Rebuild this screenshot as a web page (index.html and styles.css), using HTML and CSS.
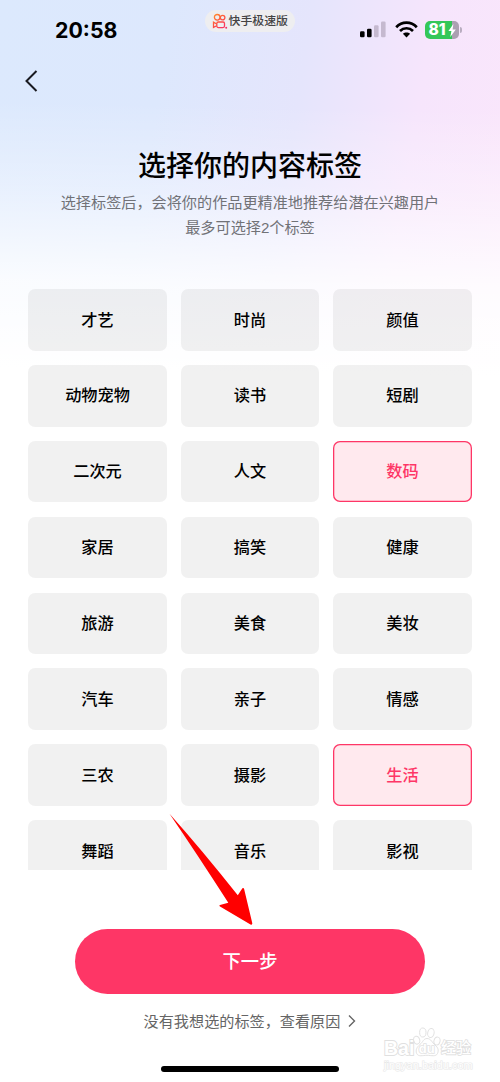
FILE: index.html
```html
<!DOCTYPE html>
<html lang="zh-CN">
<head>
<meta charset="utf-8">
<title>选择你的内容标签</title>
<link rel="stylesheet" href="styles.css">
</head>
<body>
<div class="screen">
  <header class="status">
    <span class="clock">20:58</span>
    <div class="app-pill">
      <svg class="app-logo" width="16" height="17" viewBox="0 0 16 17" fill="none">
        <defs><linearGradient id="logo" x1="0" y1="0" x2="12" y2="16" gradientUnits="userSpaceOnUse"><stop stop-color="#ff9b25"/><stop offset=".5" stop-color="#ff573e"/><stop offset="1" stop-color="#f82e67"/></linearGradient></defs>
        <g stroke="url(#logo)" stroke-width="1.3">
          <circle cx="5.2" cy="4.3" r="2.8"/><circle cx="10.6" cy="4.6" r="2.3"/>
          <rect x="4.8" y="9" width="7.7" height="5.6" rx="1.5"/>
          <path d="M4.7 11 1.5 9.2v5.2l3.2-1.7"/>
        </g>
        <circle cx="14.2" cy="14.8" r="1" fill="#f82e67"/>
      </svg>
      <span>快手极速版</span>
    </div>
    <div class="indicators">
      <svg width="26" height="17" viewBox="0 0 26 17">
        <rect x="0" y="10.3" width="4.6" height="6" rx="1.3"/><rect x="7" y="7.7" width="4.6" height="8.6" rx="1.3"/>
        <g fill="#c5b9cf"><rect x="14" y="4.2" width="4.6" height="12.1" rx="1.3"/><rect x="21" y="0.5" width="4.6" height="15.8" rx="1.3"/></g>
      </svg>
      <svg class="wifi" width="23" height="17" viewBox="0 0 23 17" fill="none">
        <g stroke="#000" stroke-width="2.7"><path d="M1.2 6.2C7 .2 16 .2 21.800 6.200"/><path d="M5 10c3.700-3.700 9.300-3.700 13 0"/></g>
        <path d="M7.900 12.800c2-1.900 5.200-1.900 7.200 0L11.500 16.500z" fill="#000"/>
      </svg>
      <div class="battery"><span>81</span>
        <svg class="bolt" width="8" height="13" viewBox="0 0 8 13"><path d="M5.400 0 .4 7h3L2.300 13 7.800 5.600H4.600z" fill="#fff"/></svg>
      </div>
    </div>
  </header>
  <nav class="nav">
    <svg width="14" height="22" viewBox="0 0 14 22" fill="none"><path d="M12.500 1 2.500 11l10 10" stroke="#191a20" stroke-width="2"/></svg>
  </nav>
  <section class="intro">
    <h1 class="title">选择你的内容标签</h1>
    <p class="hint">选择标签后，会将你的作品更精准地推荐给潜在兴趣用户<br>最多可选择2个标签</p>
  </section>
  <main class="tags">
    <div class="tag">才艺</div><div class="tag">时尚</div><div class="tag">颜值</div>
    <div class="tag">动物宠物</div><div class="tag">读书</div><div class="tag">短剧</div>
    <div class="tag">二次元</div><div class="tag">人文</div><div class="tag selected">数码</div>
    <div class="tag">家居</div><div class="tag">搞笑</div><div class="tag">健康</div>
    <div class="tag">旅游</div><div class="tag">美食</div><div class="tag">美妆</div>
    <div class="tag">汽车</div><div class="tag">亲子</div><div class="tag">情感</div>
    <div class="tag">三农</div><div class="tag">摄影</div><div class="tag selected">生活</div>
    <div class="tag">舞蹈</div><div class="tag">音乐</div><div class="tag">影视</div>
  </main>
  <footer class="actions">
    <button class="next">下一步</button>
    <div class="reason"><span>没有我想选的标签，查看原因</span>
      <svg width="8" height="12" viewBox="0 0 8 12" fill="none"><path d="m1 .6 5.500 5.400L1 11.400" stroke="#656565" stroke-width="1.4"/></svg>
    </div>
    <div class="home-bar"></div>
  </footer>
  <svg class="arrow" width="84" height="113" viewBox="0 0 84 113"><path d="M.5 .7Q33 37 68.800 82.300l4.600-7Q74.300 74.500 75 75.600L83.300 110.300Q83.300 112.200 81.500 111.400L51 93.500Q49.500 92.500 51 91.900L59.300 89.700Q28 41 .5 .7z" fill="#f00"/></svg>
  <div class="watermark">
    <div class="brand">
      <span class="bai">Bai</span>
      <svg class="paw" width="28" height="30" viewBox="0 0 28 30" fill="#fff" stroke="#e2e2e2">
        <ellipse cx="3.700" cy="13.200" rx="3" ry="4" transform="rotate(-15 3.700 13.200)"/>
        <ellipse cx="9.800" cy="5.500" rx="3.200" ry="4.500"/>
        <ellipse cx="17.900" cy="6" rx="3.200" ry="4.500" transform="rotate(12 17.900 6)"/>
        <ellipse cx="24" cy="14" rx="3" ry="4" transform="rotate(15 24 14)"/>
        <path d="M14 11.500c4 0 5 4 8 6.500s4 5 2.500 8.500c-1.600 3.500-6 1.800-10.500 1.800s-8.500 1.700-10.300-1.700C2.200 23 4 20 7 17.500s3.500-6 7-6z"/>
        <text class="du" x="13.800" y="26" text-anchor="middle">du</text>
      </svg>
      <span class="jy">经验</span>
    </div>
    <div class="site">jingyan.baidu.com</div>
  </div>
</div>
</body>
</html>
```
FILE: styles.css
```css
* { box-sizing: border-box; }
body { margin: 0; }
.screen {
  position: relative;
  display: flex;
  flex-direction: column;
  width: 500px;
  height: 1082px;
  overflow: hidden;
  color: #000;
  font-family: "Noto Sans CJK SC", sans-serif;
  background:
    linear-gradient(181deg, rgba(255,255,255,0) 10%, rgba(255,255,255,.35) 18%, rgba(255,255,255,.85) 26.500%, #fff 34.500%),
    linear-gradient(99deg, #dce9fd 0, #dde8fd 170px, #e5e5fc 310px, #f6e5fc 430px, #fae6fb 540px);
}
.status { display: flex; height: 60px; flex: none; }
.clock {
  width: 149px;
  padding: 18px 0 0 55px;
  font: 700 21.300px/25px Inter, sans-serif;
}
.app-pill {
  display: flex;
  align-items: center;
  width: 90px;
  height: 22px;
  margin: 10px 0 0 56px;
  padding-left: 7px;
  gap: .5px;
  border-radius: 11px;
  background: #eeeef0;
  color: #444;
  font-size: 11.900px;
  font-weight: 500;
  white-space: nowrap;
}
.app-pill span { line-height: 20px; padding-bottom: 2px; }
.app-logo { flex: none; }
.indicators { display: flex; align-items: flex-start; margin: 21px 0 0 65px; }
.wifi { margin-left: 8.500px; }
.battery {
  position: relative;
  width: 34px;
  height: 18px;
  margin-left: 7.500px;
  border-radius: 5px;
  padding-left: 3.500px;
  background: linear-gradient(90deg, #34c759 0 26.500px, #aca0b2 26.500px);
  color: #fff;
  font: 800 15.500px/18px Inter, sans-serif;
}
.battery::after {
  content: "";
  position: absolute;
  right: -3px;
  top: 6px;
  width: 2px;
  height: 6px;
  border-radius: 0 2px 2px 0;
  background: #b9adc0;
}
.bolt { position: absolute; left: 23px; top: 2.500px; }
.nav { height: 85px; flex: none; padding: 10px 0 0 24px; }
.intro { height: 144px; flex: none; text-align: center; }
.title { margin: 0; font-size: 28px; font-weight: 500; line-height: 38px; }
.hint {
  margin: 8px 0 0;
  color: #717277;
  font-family: "Liberation Sans", "Noto Sans CJK SC", sans-serif;
  font-size: 15.150px;
  line-height: 24.500px;
}
.tags {
  display: grid;
  grid-template-columns: repeat(3, 1fr);
  grid-auto-rows: 61.700px;
  gap: 14.200px 14px;
  height: 581px;
  flex: none;
  padding: 0 28.300px;
  overflow: hidden;
}
.tag {
  display: flex;
  align-items: center;
  justify-content: center;
  padding-bottom: 2.600px;
  border-radius: 7px;
  background: rgba(0,0,0,.055);
  font-size: 16.200px;
  font-weight: 500;
  line-height: 24px;
}
.tag.selected {
  background: #ffe9ee;
  box-shadow: inset 0 0 0 1.300px #fe3666;
  color: #fe3666;
}
.actions { display: flex; flex-direction: column; align-items: center; padding-top: 58.500px; }
.next {
  width: 350px;
  height: 65.500px;
  padding: 0 0 2px;
  border: 0;
  border-radius: 33px;
  background: #fe3666;
  color: #fff;
  font: 500 18.300px/26px "Noto Sans CJK SC", sans-serif;
}
.reason {
  display: flex;
  align-items: center;
  gap: 8px;
  margin-top: 14px;
  color: #656565;
  font-size: 15.150px;
  line-height: 24px;
}
.reason span { padding-bottom: 2px; }
.home-bar { width: 178px; height: 6px; margin-top: 32px; border-radius: 3px; background: #000; }
.arrow { position: absolute; left: 169px; top: 813px; }
.watermark { position: absolute; left: 384px; top: 1027px; width: 90px; color: #fff; }
.brand { display: flex; height: 31px; align-items: flex-start; }
.bai {
  width: 29px;
  padding-top: 10px;
  font: 700 19.500px/22px "Liberation Sans", sans-serif;
  -webkit-text-stroke: 1.800px #e0e0e0;
  paint-order: stroke fill;
}
.paw { flex: none; }
.du { font: 700 13px "Liberation Sans", sans-serif; stroke-width: 1.600px; paint-order: stroke fill; }
.jy {
  padding-top: 9px;
  font-size: 15px;
  font-weight: 500;
  line-height: 22px;
  -webkit-text-stroke: 1.600px #e0e0e0;
  paint-order: stroke fill;
}
.site {
  color: #fff;
  font: 400 11px/14px "Liberation Sans", sans-serif;
  white-space: nowrap;
  -webkit-text-stroke: 1.200px #e8e8e8;
  paint-order: stroke fill;
}
```
